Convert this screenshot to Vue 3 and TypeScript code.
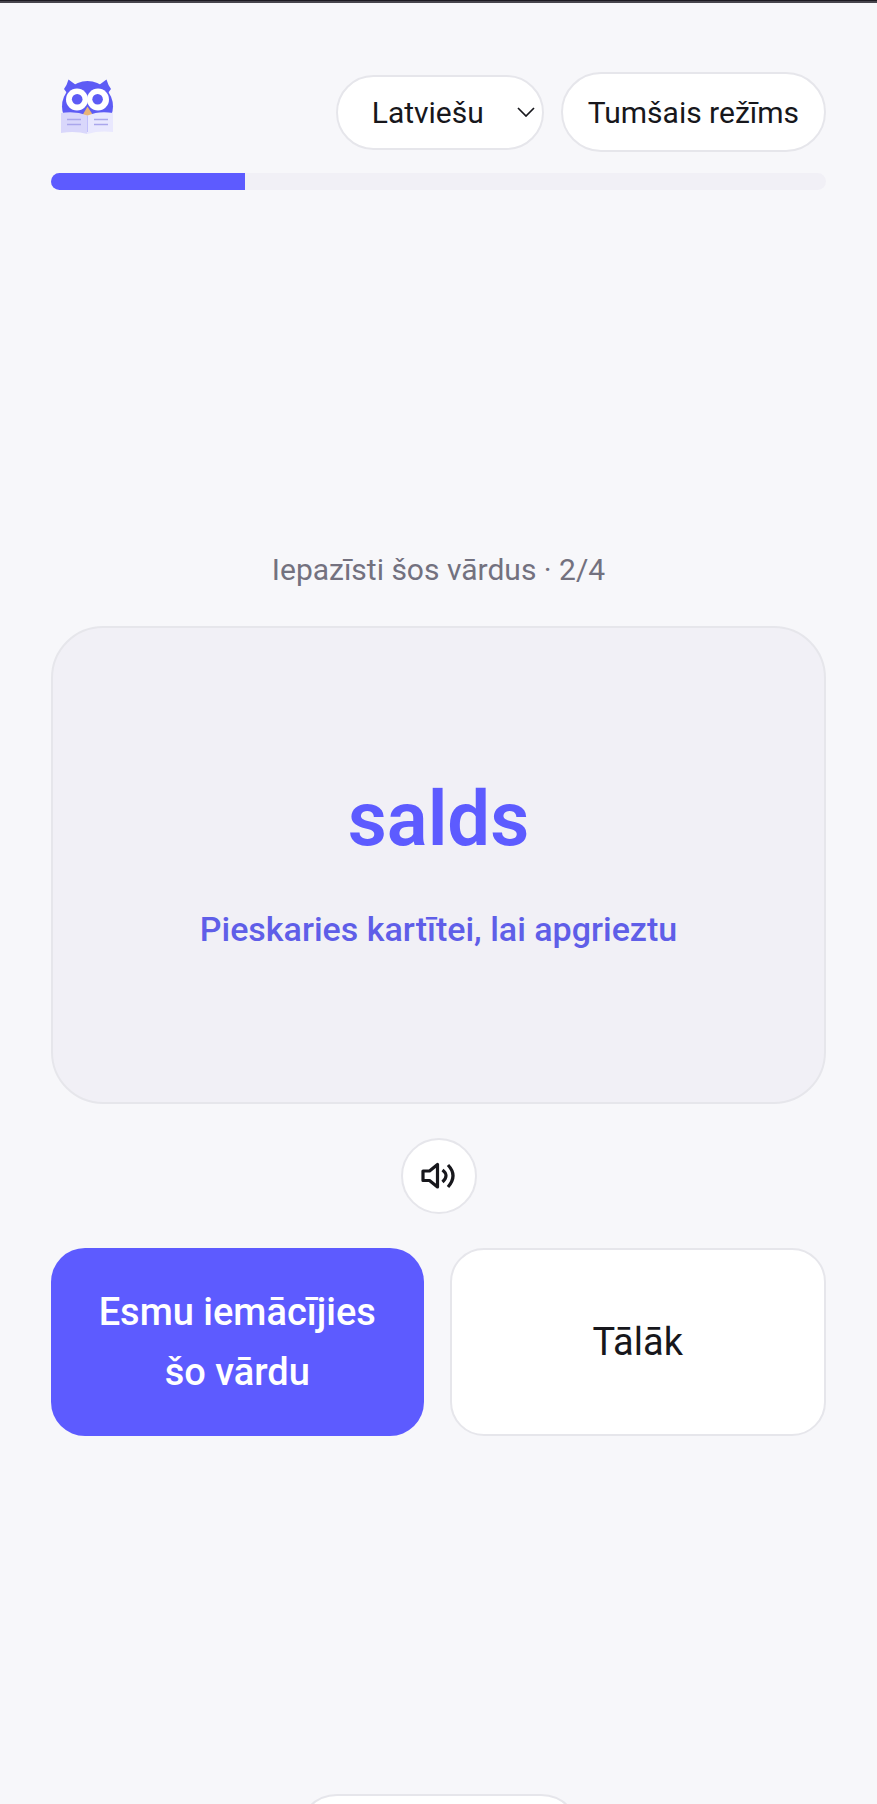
<script setup lang="ts">
import { computed, ref } from 'vue'

const languages = ['Latviešu', 'English', 'Русский']
const language = ref(languages[0])
const words = ['salds']
const current = ref(0)
const step = 2
const total = 4
const progress = 25
const barWidth = computed(() => `${progress}%`)
</script>

<template>
  <div class="page">
    <div class="status-edge"></div>
    <header class="header">
      <div class="bar">
        <svg class="logo" viewBox="0 0 72 72" role="img" aria-label="Pūce ar grāmatu">
          <circle cx="36.500" cy="30.500" r="25.500" fill="#5d5bf5" />
          <path d="M17.500 3.500 L25 9 L16 17 L13 13 Q16 9 17.500 3.500 Z" fill="#5d5bf5" />
          <path d="M55.500 3.500 L48 9 L57 17 L60 13 Q57 9 55.500 3.500 Z" fill="#5d5bf5" />
          <circle cx="26" cy="23.500" r="11" fill="#fff" />
          <circle cx="47" cy="23.500" r="11" fill="#fff" />
          <circle cx="26.200" cy="23.300" r="5.300" fill="#5d5bf5" />
          <circle cx="46.600" cy="23.300" r="5.300" fill="#5d5bf5" />
          <path d="M36.500 30.500 L42.500 40 H31 Z" fill="#e9b477" />
          <path d="M10 37 Q24 34.500 36.500 39.500 V58 Q24 54.500 10 57 Z" fill="#d9d7fb" />
          <path d="M36.500 39.500 Q48 34.500 62 37 V56 Q48 54.500 36.500 58 Z" fill="#e9e8fe" />
          <path d="M16 43.500 H30 M16 48.500 H30 M43 43.500 H57 M43 48.500 H57" stroke="#aaa6ec" stroke-width="1.300" />
        </svg>
        <div class="controls">
          <div class="select-wrap">
            <select v-model="language" class="select" aria-label="Valoda">
              <option v-for="item in languages" :key="item" :value="item">{{ item }}</option>
            </select>
            <svg class="chevron" viewBox="0 0 18 10" aria-hidden="true">
              <path d="M1 1 L9 9 L17 1" fill="none" stroke="#17171c" stroke-width="1.700" />
            </svg>
          </div>
          <button type="button" class="theme">Tumšais režīms</button>
        </div>
      </div>
      <div class="progress" role="progressbar" aria-label="Progress" :aria-valuenow="progress">
        <div class="fill" :style="{ width: barWidth }"></div>
      </div>
    </header>

    <main class="stage">
      <p class="caption">Iepazīsti šos vārdus · {{ step }}/{{ total }}</p>
      <button type="button" class="card">
        <span class="word">{{ words[current] }}</span>
        <span class="hint">Pieskaries kartītei, lai apgrieztu</span>
      </button>
      <button type="button" class="sound" aria-label="Atskaņot">
        <svg class="sound-icon" viewBox="0 0 36 28" aria-hidden="true">
          <g fill="none" stroke="#17171c" stroke-width="3.200">
            <path d="M2 9 H8.500 L16.500 2.500 V25 L8.500 18.500 H2 Z" stroke-linejoin="round" />
            <path d="M21.500 8 Q28.500 13.500 21.500 20" />
            <path d="M27 3 Q37 13.500 27 25" />
          </g>
        </svg>
      </button>
      <div class="actions">
        <button type="button" class="action primary">Esmu iemācījies šo vārdu</button>
        <button type="button" class="action">Tālāk</button>
      </div>
    </main>

    <footer class="footer">
      <button type="button" class="more" aria-label="Vairāk"></button>
    </footer>
  </div>
</template>

<style>
body {
  margin: 0;
  background: #f7f7fa;
}
</style>

<style scoped>
.page {
  height: 100vh;
  overflow-y: auto;
  scrollbar-width: none;
  background: #f7f7fa;
  color: #17171c;
  font-family: Roboto, "Noto Sans", sans-serif;
  font-size: 30px;
}
.page *,
.page {
  box-sizing: border-box;
}
button,
select {
  margin: 0;
  font: inherit;
  color: inherit;
  background: #fff;
  border: 2px solid #e6e6eb;
  cursor: pointer;
}
.status-edge {
  height: 3px;
  background: #47454d;
  border-top: 1px solid #1d1b22;
}
.header {
  padding: 69px 51px 0;
}
.bar {
  display: flex;
  align-items: center;
  justify-content: space-between;
}
.logo {
  width: 72px;
  height: 72px;
}
.controls {
  display: flex;
  align-items: center;
  gap: 17px;
}
.select-wrap {
  position: relative;
}
.select {
  appearance: none;
  display: block;
  width: 208px;
  height: 75px;
  padding: 0 34px;
  border-radius: 38px;
}
.chevron {
  position: absolute;
  right: 9px;
  top: 32px;
  width: 18px;
  height: 10px;
  pointer-events: none;
}
.theme {
  height: 80px;
  padding: 0 25px;
  border-radius: 40px;
  white-space: nowrap;
}
.progress {
  height: 17px;
  margin-top: 21px;
  border-radius: 9px;
  background: #f1f0f6;
  overflow: hidden;
}
.fill {
  height: 100%;
  background: #5d5bff;
}
.stage {
  min-height: calc(100vh - 200px);
  padding: 0 51px;
  display: flex;
  flex-direction: column;
  align-items: center;
  justify-content: center;
}
.caption {
  margin: 0 0 34px;
  line-height: 44px;
  color: #73717f;
}
.card {
  width: 100%;
  height: 478px;
  padding: 0 24px 4px;
  display: flex;
  flex-direction: column;
  align-items: center;
  justify-content: center;
  gap: 38px;
  border-radius: 52px;
  background: #f1f0f6;
  color: #5d5bff;
}
.word {
  font-size: 76px;
  font-weight: 600;
  line-height: 94px;
}
.hint {
  font-size: 34px;
  font-weight: 500;
  line-height: 50px;
  color: #5f5ee8;
}
.sound {
  width: 76px;
  height: 76px;
  margin: 34px 0;
  padding: 0;
  display: flex;
  align-items: center;
  justify-content: center;
  border-radius: 50%;
}
.sound-icon {
  width: 36px;
  height: 28px;
}
.actions {
  width: 100%;
  display: flex;
  gap: 26px;
}
.action {
  flex: 1 1 0;
  min-height: 188px;
  padding: 34px 40px;
  border-radius: 34px;
  font-size: 38px;
  line-height: 60px;
}
.primary {
  border: 0;
  background: #5d5bff;
  color: #fff;
  font-weight: 500;
}
.footer {
  display: flex;
  justify-content: center;
  padding-bottom: 40px;
}
.more {
  width: 284px;
  height: 80px;
  border-radius: 40px;
}
</style>
